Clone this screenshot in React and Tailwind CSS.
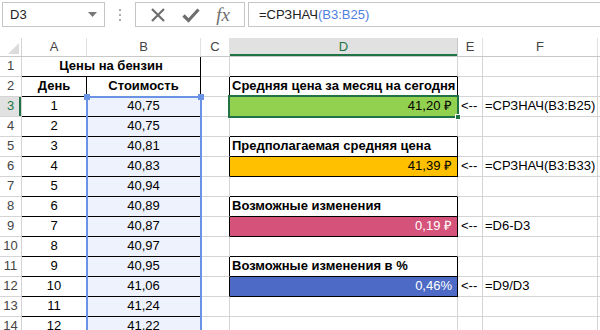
import React from "react"

const prices = ["40,75", "40,75", "40,81", "40,83", "40,94", "40,89", "40,87", "40,97", "40,95", "41,06", "41,24", "41,22"]

// boxes in column D: label row / value row
const boxes = {
    2: { label: "Средняя цена за месяц на сегодня" },
    3: { value: "41,20 ₽", fill: "bg-[#92d050]", text: "text-black", formula: "=СРЗНАЧ(B3:B25)" },
    5: { label: "Предполагаемая средняя цена" },
    6: { value: "41,39 ₽", fill: "bg-[#ffc000]", text: "text-black", formula: "=СРЗНАЧ(B3:B33)" },
    8: { label: "Возможные изменения" },
    9: { value: "0,19 ₽", fill: "bg-[#d5537a]", text: "text-white", formula: "=D6-D3" },
    11: { label: "Возможные изменения в %" },
    12: { value: "0,46%", fill: "bg-[#4d6ac6]", text: "text-white", formula: "=D9/D3" },
}

const boxRows = [2, 3, 5, 6, 8, 9, 11, 12]

function Cell({ children, rb, bb, className = "" }) {
    return (
        <div
            className={`h-[20px] border-r border-b flex items-end pb-[1px] overflow-visible whitespace-nowrap ${rb ? "border-r-black" : "border-r-[#d4d4d4]"} ${bb ? "border-b-black" : "border-b-[#d4d4d4]"} ${className}`}
        >
            {children}
        </div>
    )
}

function FormulaBar() {
    return (
        <div className="h-[38px] flex items-start pt-[2px] bg-white">
            {/* name box */}
            <div className="ml-[2px] w-[103px] h-[25px] border border-[#c6c6c6] flex items-center justify-between px-[7px]">
                <span className="text-[13px] text-[#222]">D3</span>
                <svg width="9" height="5" viewBox="0 0 9 5"><path d="M0 0h9L4.5 5z" fill="#777" /></svg>
            </div>
            {/* dots */}
            <div className="w-[30px] h-[25px] flex flex-col items-center justify-center gap-[3px]">
                <div className="w-[2px] h-[2px] bg-[#aaa]" />
                <div className="w-[2px] h-[2px] bg-[#aaa]" />
                <div className="w-[2px] h-[2px] bg-[#aaa]" />
            </div>
            {/* cancel / enter / fx */}
            <div className="w-[110px] h-[25px] border border-[#c6c6c6] flex items-center justify-around px-[6px]">
                <svg width="16" height="16" viewBox="0 0 16 16">
                    <path d="M2 2L14 14M14 2L2 14" stroke="#6f6f6f" strokeWidth="2.2" fill="none" />
                </svg>
                <svg width="18" height="16" viewBox="0 0 18 16">
                    <path d="M1.5 8.5L6.5 13.5L16.5 2.5" stroke="#6f6f6f" strokeWidth="3.2" fill="none" />
                </svg>
                <span className="text-[19px] italic text-[#6f6f6f] leading-none" style={{ fontFamily: '"Liberation Serif", serif' }}>fx</span>
            </div>
            {/* formula */}
            <div className="ml-[3px] flex-1 h-[25px] border-y border-l border-[#c6c6c6] flex items-center pl-[10px] text-[13px] text-[#222]">
                =СРЗНАЧ<span className="text-[#4f7fe0]">(B3:B25)</span>
            </div>
        </div>
    )
}

function Headers() {
    const cols = [
        { n: "A", w: "w-[65px]" },
        { n: "B", w: "w-[114px]" },
        { n: "C", w: "w-[29px]" },
        { n: "D", w: "w-[228px]", sel: true },
        { n: "E", w: "w-[25px]" },
        { n: "F", w: "w-[115px]" },
    ]
    return (
        <div className="flex h-[19px] border-b border-[#c8c8c8]">
            <div className="w-[22px] border-r border-[#d4d4d4] flex items-end justify-end p-[2px]">
                <svg width="11" height="11" viewBox="0 0 11 11"><path d="M11 0V11H0z" fill="#dcdcdc" /></svg>
            </div>
            {cols.map(c => (
                <div
                    key={c.n}
                    className={`${c.w} border-r flex items-center justify-center text-[13px] ${c.sel ? "bg-[#e1e1e1] text-[#217346] border-r-[#c8c8c8] shadow-[inset_0_-2px_0_#217346]" : "bg-white text-[#444] border-r-[#e1e1e1]"}`}
                >
                    {c.n}
                </div>
            ))}
            <div className="flex-1 bg-white" />
        </div>
    )
}

function Row({ r }) {
    const box = boxes[r]
    const inBox = boxRows.includes(r)
    const isSel = r === 3
    return (
        <>
            <Cell
                className={`justify-center ${isSel ? "bg-[#e1e1e1] text-[#217346] shadow-[inset_-2px_0_0_#217346]" : "text-[#444]"}`}
            >
                {r}
            </Cell>
            {r === 1 ? (
                <Cell rb bb className="col-span-2 justify-center font-bold">Цены на бензин</Cell>
            ) : r === 2 ? (
                <>
                    <Cell rb bb className="justify-center font-bold">День</Cell>
                    <Cell rb bb className="justify-center font-bold bg-white">Стоимость</Cell>
                </>
            ) : (
                <>
                    <Cell rb bb className="justify-center">{r - 2}</Cell>
                    <Cell rb bb className="justify-center bg-[#eef2fc]">{prices[r - 3]}</Cell>
                </>
            )}
            {/* C */}
            <Cell rb={inBox} />
            {/* D */}
            {box && box.label ? (
                <Cell rb bb className="font-bold pl-[2px]">{box.label}</Cell>
            ) : box ? (
                <Cell rb bb className={`relative justify-end pr-[5px] ${box.fill} ${box.text}`}>
                    {box.value}
                    {isSel && (
                        <>
                            <div className="absolute left-[-2px] top-[-2px] right-[-2px] bottom-[-2px] border-2 border-[#217346] pointer-events-none" />
                            <div className="absolute right-[-4px] bottom-[-4px] w-[6px] h-[6px] bg-[#217346] border border-white" />
                        </>
                    )}
                </Cell>
            ) : (
                <Cell bb={r <= 12} />
            )}
            {/* E */}
            <Cell className="pl-[3px]">{box && box.value ? "<--" : ""}</Cell>
            {/* F */}
            <Cell className="pl-[2px]">{box && box.value ? box.formula : ""}</Cell>
            <div className="h-[20px] border-b border-[#d4d4d4]" />
        </>
    )
}

export default function App() {
    const rows = Array.from({ length: 14 }, (_, i) => i + 1)
    return (
        <div
            className="w-[600px] h-[330px] overflow-hidden bg-white text-[13px] text-black"
            style={{ fontFamily: '"Liberation Sans", Arial, sans-serif' }}
        >
            <FormulaBar />
            <Headers />
            <div className="relative grid grid-cols-[22px_65px_114px_29px_228px_25px_115px_2px]">
                {rows.map(r => <Row key={r} r={r} />)}
                {/* selection of B3:B25 */}
                <div className="absolute left-[86px] top-[39px] w-[116px] h-[300px] border-2 border-[#6a93e6] pointer-events-none" />
                <div className="absolute left-[84px] top-[37px] w-[6px] h-[6px] bg-[#6a93e6]" />
                <div className="absolute left-[198px] top-[37px] w-[6px] h-[6px] bg-[#6a93e6]" />
            </div>
        </div>
    )
}
